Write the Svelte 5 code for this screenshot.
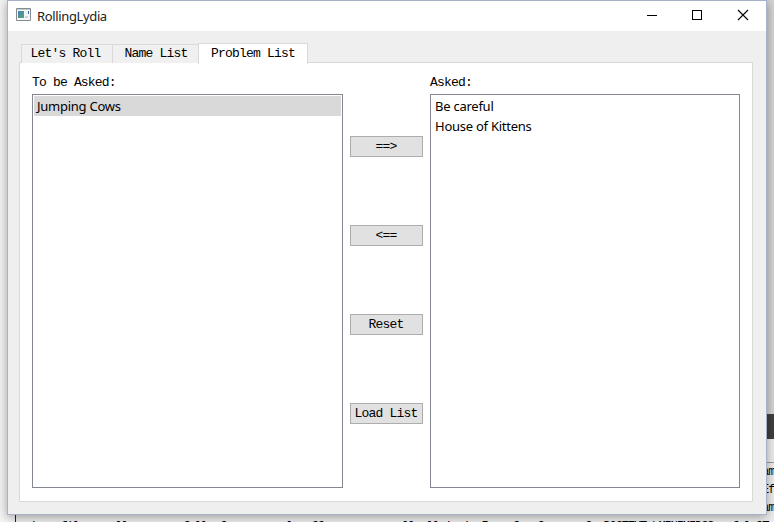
<script>
  const tabs = ["Let's Roll", 'Name List', 'Problem List'];
  const pending = ['Jumping Cows'];
  const asked = ['Be careful', 'House of Kittens'];
  const actions = ['==>', '<==', 'Reset', 'Load List'];
</script>

<div class="desktop">
  <div class="behind">
    <div class="dark"></div>
    <div class="strip"></div>
    <div class="code">am<br />Ef<br />am</div>
  </div>
  <div class="rule"></div>
  <div class="line">is a file a calls assume full of a camera la off as a user a ll all is in In a few f so on C: DOCTEXT \MINIMIDGS a f l ST</div>

  <section class="window">
    <header>
      <svg class="app" width="16" height="14" viewBox="0 0 16 14">
        <defs><linearGradient id="g" x1="0" y1="0" x2="1" y2="1"><stop stop-color="#4a7fb0" /><stop offset="1" stop-color="#55a878" /></linearGradient></defs>
        <path d="M.5 .5h14v12H.5z" fill="#f4f6f7" stroke="#868c90" />
        <path d="M1 1h13v1H1z" fill="#c4cad0" />
        <path d="M2 3h6v7H2z" fill="url(#g)" />
        <path d="M9 8h3v2h-3z" fill="#cfd4d8" />
        <path d="M12 3h1v3h-1z" fill="#3f6cae" />
      </svg>
      <h1>RollingLydia</h1>
      <svg class="controls" width="108" height="14" viewBox="0 0 108 14" fill="none" stroke="#000">
        <path d="M1 7.500h10M46.500 2.500h9v9h-9z" shape-rendering="crispEdges" />
        <path d="M92 2l10 10M102 2l-10 10" stroke-width="1.100" />
      </svg>
    </header>
    <nav>
      {#each tabs as tab, i}
        <button class="tab" class:active={i === 2}>{tab}</button>
      {/each}
    </nav>
    <main>
      <div class="column">
        <label for="pending">To be Asked:</label>
        <ul id="pending">
          {#each pending as item}<li class="selected">{item}</li>{/each}
        </ul>
      </div>
      <div class="actions">
        {#each actions as action}<button>{action}</button>{/each}
      </div>
      <div class="column asked">
        <label for="asked">Asked:</label>
        <ul id="asked">
          {#each asked as item}<li>{item}</li>{/each}
        </ul>
      </div>
    </main>
  </section>
</div>

<style>
  * { box-sizing: border-box; }
  .desktop {
    position: relative;
    width: 774px;
    height: 522px;
    overflow: hidden;
    background: linear-gradient(90deg, #f5f5f5 0 16px, #eee 16px);
    font: 13px/18px "Liberation Mono", monospace;
    letter-spacing: -.82px;
    color: #000;
  }
  .behind {
    position: absolute;
    right: 0;
    top: 0;
    width: 12px;
    height: 522px;
    background: #d4d4d4;
    padding-top: 414px;
  }
  .dark { height: 25px; background: #404040; }
  .strip { height: 24px; background: #eee; border-bottom: 1px solid #999; }
  .code { height: 59px; background: #eee; white-space: nowrap; font-size: 12px; letter-spacing: -1px; }
  .rule { position: absolute; left: 15px; top: 514px; width: 1px; height: 8px; background: #222; }
  .line {
    position: absolute;
    left: 30px;
    top: 518px;
    white-space: nowrap;
    font-size: 12px;
    letter-spacing: -1.100px;
  }
  .window {
    position: absolute;
    left: 7px;
    top: 0;
    width: 760px;
    height: 515px;
    border: 1px solid #a6b3c7;
    background: #efefef;
    box-shadow: 0 2px 10px rgba(0, 0, 0, .36);
    display: flex;
    flex-direction: column;
  }
  header {
    display: flex;
    align-items: center;
    height: 30px;
    flex: none;
    background: #fff;
    padding: 0 12px 0 8px;
  }
  .app { margin-bottom: 2px; }
  .controls { margin-bottom: 2px; }
  h1 {
    flex: 1;
    margin: 0 0 0 5px;
    font: 13px/28px "Noto Sans", sans-serif;
    letter-spacing: -.36px;
    color: #222;
  }
  nav {
    display: flex;
    align-items: flex-end;
    height: 32px;
    flex: none;
    padding-left: 13px;
    position: relative;
    z-index: 1;
  }
  button { font: inherit; letter-spacing: inherit; color: inherit; margin: 0; padding: 0; border-radius: 0; }
  .tab {
    width: 92px;
    height: 19px;
    border: 1px solid #d9d9d9;
    border-bottom: 0;
    background: #f0f0f0;
    padding-right: 3px;
  }
  .tab:nth-child(2) { width: 85px; border-left: 0; border-right: 0; padding: 0 0 0 1px; }
  .tab.active {
    width: 110px;
    height: 21px;
    background: #fff;
    margin-bottom: -1px;
    padding: 0;
  }
  main {
    display: flex;
    width: 734px;
    height: 440px;
    margin: -1px 0 0 11px;
    border: 1px solid #d9d9d9;
    background: #fff;
    padding: 10px 12px 13px;
  }
  .column { width: 311px; flex: none; display: flex; flex-direction: column; }
  .column.asked { width: 310px; }
  label { height: 21px; line-height: 19px; }
  ul {
    flex: 1;
    margin: 0;
    padding: 1px;
    list-style: none;
    border: 1px solid #828790;
    font: 13px/20px "Noto Sans", sans-serif;
    letter-spacing: -.25px;
  }
  li { height: 20px; padding-left: 3px; }
  .selected { background: #d9d9d9; }
  .actions {
    width: 87px;
    flex: none;
    padding: 63px 7px 0;
    display: flex;
    flex-direction: column;
    gap: 68px;
  }
  .actions button { height: 21px; border: 1px solid #adadad; background: #e1e1e1; line-height: 18px; padding-right: 1px; }
</style>
